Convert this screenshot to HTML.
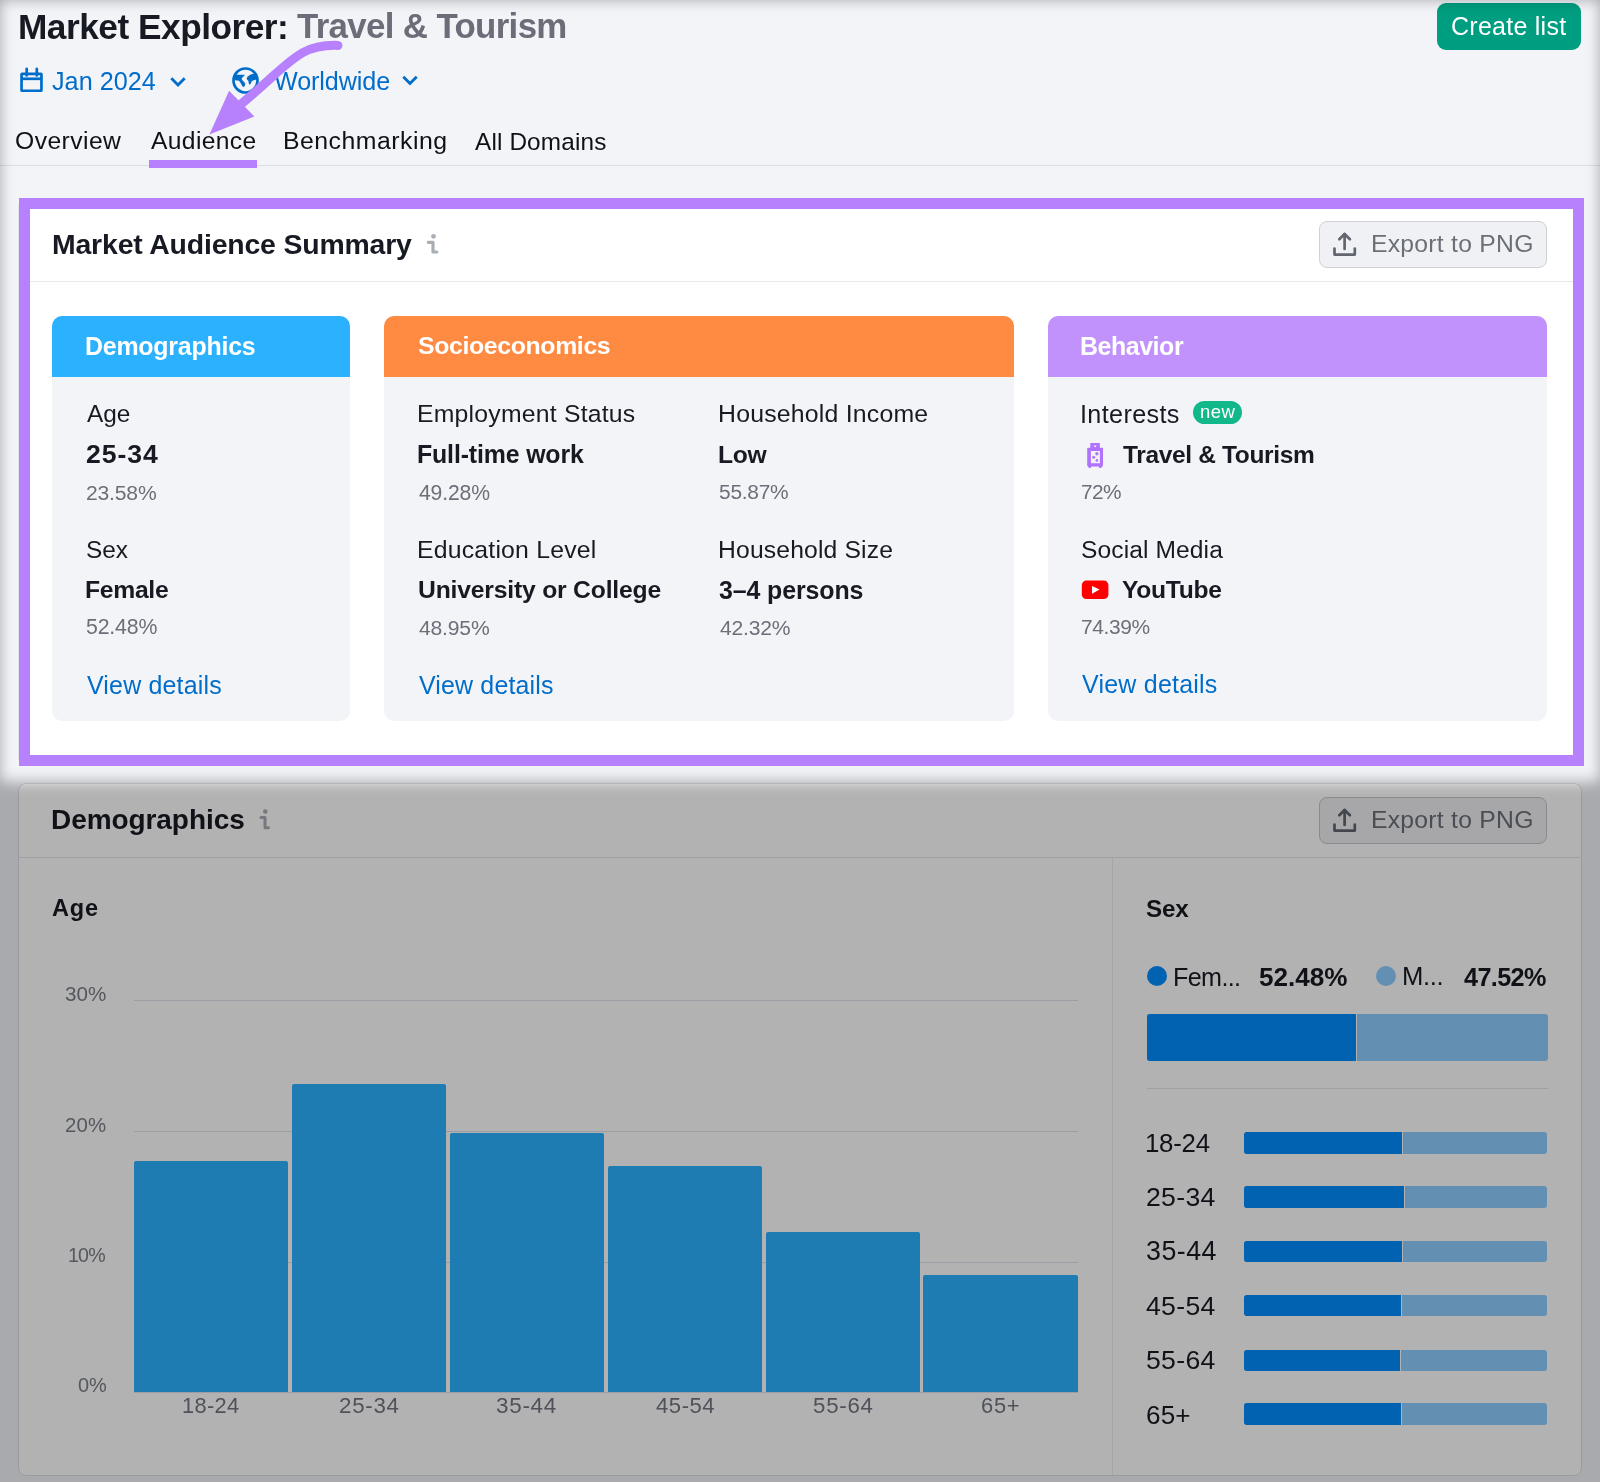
<!DOCTYPE html><html><head><meta charset="utf-8"><style>
*{margin:0;padding:0;box-sizing:border-box}
html,body{width:1600px;height:1482px;overflow:hidden}
body{position:relative;background:#f3f4f8;font-family:"Liberation Sans",sans-serif}
.t{position:absolute;white-space:pre;line-height:1;will-change:transform}
.a{position:absolute}
</style></head><body>
<div class="a" style="left:0;top:165px;width:1600px;height:1px;background:#dcdee4"></div>
<div class="a" style="left:149px;top:160px;width:108px;height:8px;background:#b780fc"></div>
<div class="a" style="left:1437px;top:3px;width:144px;height:46.5px;border-radius:9px;background:#009e80"></div>
<svg class="a" style="left:0;top:0" width="1600" height="200" viewBox="0 0 1600 200">
<g fill="none" stroke="#006dca" stroke-width="2.7">
<rect x="21.55" y="73.85" width="19.9" height="16.9" rx="0.6"/>
<line x1="21" y1="78.8" x2="42" y2="78.8"/>
<line x1="26.7" y1="68.8" x2="26.7" y2="75.5" stroke-linecap="round"/>
<line x1="36.8" y1="68.8" x2="36.8" y2="75.5" stroke-linecap="round"/>
<polyline points="171.3,78.3 178,85 184.7,78.3" stroke-width="2.8" stroke-linejoin="miter"/>
<polyline points="403.3,76.8 410,83.5 416.7,76.8" stroke-width="2.8"/>
<circle cx="245.5" cy="80.5" r="12.0"/>
</g>
<g fill="#006dca">
<path d="M234.1,75.1 C234.6,74.0 235.7,74.8 237.6,74.7 C239.5,74.6 242.4,74.6 243.8,74.7 C245.2,74.8 244.8,74.6 244.4,75.4 C244.0,76.2 241.6,77.4 241.7,78.9 C241.8,80.4 244.3,81.6 244.9,82.9 C245.5,84.2 245.2,84.8 244.9,85.6 C244.6,86.4 244.0,86.8 243.5,86.9 C243.0,87.0 242.8,86.7 242.2,85.9 C241.6,85.1 241.3,83.9 240.6,82.9 C239.9,81.9 239.8,81.4 238.7,80.8 C237.6,80.2 236.1,81.1 235.2,80.0 C234.3,78.9 233.6,76.2 234.1,75.1 Z"/>
<path d="M246.8,78.9 C246.7,77.9 246.9,77.2 248.1,76.2 C249.3,75.2 251.2,74.2 252.7,74.0 C254.2,73.8 254.9,74.1 255.7,75.1 C256.5,76.1 257.0,77.9 256.8,78.9 C256.6,79.9 255.6,79.5 254.6,80.0 C253.6,80.5 252.8,80.4 251.9,81.3 C251.0,82.2 250.9,83.8 250.3,84.3 C249.7,84.8 249.3,84.4 248.9,83.8 C248.5,83.2 248.8,82.1 248.4,81.1 C248.0,80.1 246.9,79.9 246.8,78.9 Z"/>
</g>
</svg>
<div class="t" style="left:18.3px;top:9.0px;font-size:35.26px;font-weight:700;color:#171a22;letter-spacing:-0.49px">Market Explorer:</div>
<div class="t" style="left:296.5px;top:9.3px;font-size:34.87px;font-weight:700;color:#6b6d78;letter-spacing:-0.66px">Travel &amp; Tourism</div>
<div class="t" style="left:52.4px;top:69.3px;font-size:25.2px;font-weight:400;color:#006dca;letter-spacing:0.03px">Jan 2024</div>
<div class="t" style="left:274.0px;top:69.3px;font-size:25.13px;font-weight:400;color:#006dca;letter-spacing:-0.08px">Worldwide</div>
<div class="t" style="left:15.0px;top:129.3px;font-size:24.7px;font-weight:400;color:#0f1116;letter-spacing:0.43px">Overview</div>
<div class="t" style="left:151.0px;top:129.3px;font-size:24.64px;font-weight:400;color:#0f1116;letter-spacing:0.36px">Audience</div>
<div class="t" style="left:282.5px;top:129.2px;font-size:24.83px;font-weight:400;color:#0f1116;letter-spacing:0.48px">Benchmarking</div>
<div class="t" style="left:474.5px;top:129.6px;font-size:24.33px;font-weight:400;color:#0f1116;letter-spacing:0.15px">All Domains</div>
<div class="t" style="left:1451.4px;top:14.0px;font-size:25.0px;font-weight:400;color:#ffffff;letter-spacing:0.26px">Create list</div>
<svg class="a" style="left:0;top:0" width="600" height="200" viewBox="0 0 600 200">
<path d="M338,45.4 C297.9,44.2 290.9,63 240,105" fill="none" stroke="#b780fc" stroke-width="9" stroke-linecap="round"/>
<polygon points="209.4,134.4 229.1,90.8 254.4,116.6" fill="#b780fc"/>
</svg>
<div class="a" style="left:17.6px;top:205px;width:1.2px;height:555px;background:#e1e2e6"></div>
<div class="a" style="left:19px;top:198px;width:1565px;height:568px;border:11px solid #b780fc;background:#fff"></div>
<div class="a" style="left:30px;top:281px;width:1543px;height:1px;background:#e8e9ee"></div>
<div class="a" style="left:1319px;top:220.5px;width:228px;height:47px;border:1px solid #cfd1d6;border-radius:8px;background:#f0f1f4"></div>
<svg class="a" style="left:1326px;top:226px" width="40" height="40" viewBox="0 0 40 40" fill="none" stroke="#61656e" stroke-width="2.7" stroke-linecap="round" stroke-linejoin="round">
<polyline points="8.5,22.5 8.5,28.6 28.8,28.6 28.8,22.5"/>
<line x1="18.6" y1="8" x2="18.6" y2="23"/>
<polyline points="13.3,13.3 18.6,8 23.9,13.3"/>
</svg>
<svg class="a" style="left:420px;top:225px" width="30" height="40" viewBox="0 0 30 40">
<circle cx="13.5" cy="11.3" r="2.4" fill="#a9adb4"/>
<path d="M8.3,17.3 H13 V27 H16.8" fill="none" stroke="#a9adb4" stroke-width="3.2" stroke-linecap="round" stroke-linejoin="round"/>
</svg>
<div class="a" style="left:52.4px;top:316px;width:297.6px;height:405px;border-radius:10px;background:#f3f4f8;overflow:hidden"><div style="height:60.5px;background:#2cb1ff"></div></div>
<div class="a" style="left:383.6px;top:316px;width:630.0px;height:405px;border-radius:10px;background:#f3f4f8;overflow:hidden"><div style="height:60.5px;background:#ff8b43"></div></div>
<div class="a" style="left:1047.5px;top:316px;width:499.9000000000001px;height:405px;border-radius:10px;background:#f3f4f8;overflow:hidden"><div style="height:60.5px;background:#c292fc"></div></div>
<div class="t" style="left:51.5px;top:230.0px;font-size:28.4px;font-weight:700;color:#171a22;letter-spacing:-0.16px">Market Audience Summary</div>
<div class="t" style="left:1371.3px;top:231.8px;font-size:24.76px;font-weight:400;color:#6b6f78;letter-spacing:0.24px">Export to PNG</div>
<div class="t" style="left:84.6px;top:334.3px;font-size:24.93px;font-weight:700;color:#ffffff;letter-spacing:-0.22px">Demographics</div>
<div class="t" style="left:417.7px;top:334.4px;font-size:24.8px;font-weight:700;color:#ffffff;letter-spacing:-0.34px">Socioeconomics</div>
<div class="t" style="left:1079.6px;top:334.3px;font-size:24.92px;font-weight:700;color:#ffffff;letter-spacing:-0.43px">Behavior</div>
<div class="t" style="left:86.8px;top:402.2px;font-size:24.4px;font-weight:400;color:#171a22;letter-spacing:0.00px">Age</div>
<div class="t" style="left:416.5px;top:401.9px;font-size:24.78px;font-weight:400;color:#171a22;letter-spacing:0.22px">Employment Status</div>
<div class="t" style="left:717.7px;top:401.9px;font-size:24.84px;font-weight:400;color:#171a22;letter-spacing:0.21px">Household Income</div>
<div class="t" style="left:1079.6px;top:401.6px;font-size:25.18px;font-weight:400;color:#171a22;letter-spacing:0.36px">Interests</div>
<div class="t" style="left:85.8px;top:440.9px;font-size:26.59px;font-weight:700;color:#171a22;letter-spacing:0.93px">25-34</div>
<div class="t" style="left:416.5px;top:442.3px;font-size:24.89px;font-weight:700;color:#171a22;letter-spacing:-0.14px">Full-time work</div>
<div class="t" style="left:717.7px;top:442.5px;font-size:24.65px;font-weight:700;color:#171a22;letter-spacing:-0.35px">Low</div>
<div class="t" style="left:1122.8px;top:442.6px;font-size:24.51px;font-weight:700;color:#171a22;letter-spacing:-0.35px">Travel &amp; Tourism</div>
<div class="t" style="left:85.8px;top:482.2px;font-size:21.11px;font-weight:400;color:#6b6f78;letter-spacing:-0.18px">23.58%</div>
<div class="t" style="left:418.5px;top:482.1px;font-size:21.15px;font-weight:400;color:#6b6f78;letter-spacing:-0.14px">49.28%</div>
<div class="t" style="left:718.7px;top:482.3px;font-size:20.91px;font-weight:400;color:#6b6f78;letter-spacing:-0.24px">55.87%</div>
<div class="t" style="left:1080.6px;top:482.4px;font-size:20.84px;font-weight:400;color:#6b6f78;letter-spacing:-0.55px">72%</div>
<div class="t" style="left:85.8px;top:537.9px;font-size:24.4px;font-weight:400;color:#171a22;letter-spacing:0.00px">Sex</div>
<div class="t" style="left:416.5px;top:537.6px;font-size:24.81px;font-weight:400;color:#171a22;letter-spacing:0.20px">Education Level</div>
<div class="t" style="left:717.7px;top:537.7px;font-size:24.7px;font-weight:400;color:#171a22;letter-spacing:0.16px">Household Size</div>
<div class="t" style="left:1080.6px;top:537.8px;font-size:24.58px;font-weight:400;color:#171a22;letter-spacing:0.10px">Social Media</div>
<div class="t" style="left:84.8px;top:578.2px;font-size:24.72px;font-weight:700;color:#171a22;letter-spacing:-0.30px">Female</div>
<div class="t" style="left:417.5px;top:578.2px;font-size:24.7px;font-weight:700;color:#171a22;letter-spacing:-0.19px">University or College</div>
<div class="t" style="left:718.7px;top:578.0px;font-size:24.93px;font-weight:700;color:#171a22;letter-spacing:-0.10px">3–4 persons</div>
<div class="t" style="left:1122.0px;top:578.2px;font-size:24.64px;font-weight:700;color:#171a22;letter-spacing:-0.28px">YouTube</div>
<div class="t" style="left:85.8px;top:617.0px;font-size:21.28px;font-weight:400;color:#6b6f78;letter-spacing:-0.16px">52.48%</div>
<div class="t" style="left:418.5px;top:617.2px;font-size:21.12px;font-weight:400;color:#6b6f78;letter-spacing:-0.18px">48.95%</div>
<div class="t" style="left:719.7px;top:617.2px;font-size:21.09px;font-weight:400;color:#6b6f78;letter-spacing:-0.22px">42.32%</div>
<div class="t" style="left:1080.6px;top:617.3px;font-size:20.94px;font-weight:400;color:#6b6f78;letter-spacing:-0.40px">74.39%</div>
<div class="t" style="left:86.8px;top:672.5px;font-size:24.97px;font-weight:400;color:#006dca;letter-spacing:0.17px">View details</div>
<div class="t" style="left:418.5px;top:672.5px;font-size:24.96px;font-weight:400;color:#006dca;letter-spacing:0.16px">View details</div>
<div class="t" style="left:1081.6px;top:672.4px;font-size:25.01px;font-weight:400;color:#006dca;letter-spacing:0.22px">View details</div>
<div class="a" style="left:1192.7px;top:400.6px;width:49.5px;height:23.6px;border-radius:12px;background:#13b88a"></div>
<div class="t" style="left:1199.5px;top:403.3px;font-size:18.5px;color:#fff;letter-spacing:0.4px">new</div>
<svg class="a" style="left:1076px;top:436px" width="40" height="40" viewBox="0 0 40 40">
<path fill="#b072ff" fill-rule="evenodd" d="M14.3,7 H23.8 V11.8 H26.5 Q27,11.8 27,12.5 V29.5 L25,31.9 H23.5 L22.5,30.5 H15.5 L14.5,31.9 H13 L11.2,29.5 V12.5 Q11.2,11.8 11.8,11.8 H14.3 Z M17.5,9.5 H20.8 L19.2,11.4 Z M14.9,14.9 V27.3 H23.9 V14.9 Z"/>
<circle cx="20.9" cy="17.8" r="1.7" fill="#b072ff"/>
<circle cx="17.7" cy="21.2" r="1.5" fill="#b072ff"/>
<circle cx="20.9" cy="24.4" r="1.3" fill="#b072ff"/>
</svg>
<svg class="a" style="left:1076px;top:572px" width="40" height="40" viewBox="0 0 40 40">
<rect x="5.8" y="8.6" width="26.6" height="18.4" rx="4.5" fill="#ff0000"/>
<polygon points="16,14 23.6,17.6 16,21.8" fill="#fff"/>
</svg>
<div class="a" style="left:18px;top:782.5px;width:1563.5px;height:693.5px;border:1.2px solid #dcdde2;border-radius:8px;background:#fff"></div>
<div class="a" style="left:19px;top:857px;width:1561px;height:1px;background:#e4e5ea"></div>
<div class="a" style="left:1112px;top:858px;width:1px;height:617px;background:#ecedf0"></div>
<div class="a" style="left:1319px;top:796.5px;width:228px;height:47px;border:1.2px solid #c4c6cc;border-radius:8px;background:#eff0f3"></div>
<svg class="a" style="left:1326px;top:802px" width="40" height="40" viewBox="0 0 40 40" fill="none" stroke="#61656e" stroke-width="2.7" stroke-linecap="round" stroke-linejoin="round">
<polyline points="8.5,22.5 8.5,28.6 28.8,28.6 28.8,22.5"/>
<line x1="18.6" y1="8" x2="18.6" y2="23"/>
<polyline points="13.3,13.3 18.6,8 23.9,13.3"/>
</svg>
<svg class="a" style="left:250px;top:801px" width="30" height="40" viewBox="0 0 30 40">
<circle cx="15.3" cy="10.5" r="2.3" fill="#a9adb4"/>
<path d="M11,16.5 H15 V26.8 H18.5" fill="none" stroke="#a9adb4" stroke-width="3" stroke-linecap="round" stroke-linejoin="round"/>
</svg>
<div class="a" style="left:133.7px;top:1000px;width:944px;height:1.2px;background:#e0e3ec"></div><div class="a" style="left:133.7px;top:1131px;width:944px;height:1.2px;background:#e0e3ec"></div><div class="a" style="left:133.7px;top:1261.5px;width:944px;height:1.2px;background:#e0e3ec"></div>
<div class="a" style="left:133.7px;top:1161.2px;width:154.5px;height:231.8px;background:#2cb2ff;border-radius:2px 2px 0 0"></div><div class="a" style="left:292px;top:1084.4px;width:154.0px;height:308.6px;background:#2cb2ff;border-radius:2px 2px 0 0"></div><div class="a" style="left:449.8px;top:1132.7px;width:154.5px;height:260.3px;background:#2cb2ff;border-radius:2px 2px 0 0"></div><div class="a" style="left:608px;top:1166.4px;width:154.1px;height:226.6px;background:#2cb2ff;border-radius:2px 2px 0 0"></div><div class="a" style="left:765.5px;top:1231.6px;width:154.5px;height:161.4px;background:#2cb2ff;border-radius:2px 2px 0 0"></div><div class="a" style="left:923.4px;top:1275.4px;width:154.3px;height:117.6px;background:#2cb2ff;border-radius:2px 2px 0 0"></div>
<div class="a" style="left:133.7px;top:1392px;width:944px;height:1.2px;background:#e0e3ec"></div>
<div class="a" style="left:1146.5px;top:966.3px;width:20px;height:20px;border-radius:50%;background:#008dfd"></div>
<div class="a" style="left:1376px;top:966.3px;width:20px;height:20px;border-radius:50%;background:#8dcdff"></div>
<div class="a" style="left:1146.5px;top:1013.7px;width:401px;height:47.4px;border-radius:3px;background:#8dcdff;overflow:hidden"><div style="width:210px;height:100%;background:#008dfd;border-right:1.5px solid #fff"></div></div>
<div class="a" style="left:1146.5px;top:1088px;width:401px;height:1.2px;background:#e4e5ea"></div>
<div class="a" style="left:1244.2px;top:1132.4px;width:302.8px;height:21.6px;border-radius:3px;background:#8dcdff;overflow:hidden"><div style="width:158.4px;height:100%;background:#008dfd;border-right:1.5px solid #fff"></div></div><div class="a" style="left:1244.2px;top:1186.2px;width:302.8px;height:21.6px;border-radius:3px;background:#8dcdff;overflow:hidden"><div style="width:160.4px;height:100%;background:#008dfd;border-right:1.5px solid #fff"></div></div><div class="a" style="left:1244.2px;top:1240.8px;width:302.8px;height:21.6px;border-radius:3px;background:#8dcdff;overflow:hidden"><div style="width:159.0px;height:100%;background:#008dfd;border-right:1.5px solid #fff"></div></div><div class="a" style="left:1244.2px;top:1294.9px;width:302.8px;height:21.6px;border-radius:3px;background:#8dcdff;overflow:hidden"><div style="width:158.1px;height:100%;background:#008dfd;border-right:1.5px solid #fff"></div></div><div class="a" style="left:1244.2px;top:1349.5px;width:302.8px;height:21.6px;border-radius:3px;background:#8dcdff;overflow:hidden"><div style="width:157.0px;height:100%;background:#008dfd;border-right:1.5px solid #fff"></div></div><div class="a" style="left:1244.2px;top:1403.3px;width:302.8px;height:21.6px;border-radius:3px;background:#8dcdff;overflow:hidden"><div style="width:157.6px;height:100%;background:#008dfd;border-right:1.5px solid #fff"></div></div>
<div class="t" style="left:51.3px;top:805.6px;font-size:28.03px;font-weight:700;color:#171a22;letter-spacing:-0.08px">Demographics</div>
<div class="t" style="left:1371.3px;top:807.8px;font-size:24.76px;font-weight:400;color:#6b6f78;letter-spacing:0.24px">Export to PNG</div>
<div class="t" style="left:52.3px;top:897.4px;font-size:23.52px;font-weight:700;color:#171a22;letter-spacing:0.85px">Age</div>
<div class="t" style="left:1145.7px;top:897.2px;font-size:24.21px;font-weight:700;color:#171a22;letter-spacing:-0.15px">Sex</div>
<div class="t" style="left:64.5px;top:983.5px;font-size:20.58px;font-weight:400;color:#7a7e87;letter-spacing:0.05px">30%</div>
<div class="t" style="left:65.2px;top:1115.0px;font-size:20.4px;font-weight:400;color:#7a7e87;letter-spacing:0.20px">20%</div>
<div class="t" style="left:68.2px;top:1246.1px;font-size:19.61px;font-weight:400;color:#7a7e87;letter-spacing:-0.80px">10%</div>
<div class="t" style="left:77.6px;top:1376.4px;font-size:19.93px;font-weight:400;color:#7a7e87;letter-spacing:0.00px">0%</div>
<div class="t" style="left:181.6px;top:1395.4px;font-size:21.78px;font-weight:400;color:#72767f;letter-spacing:0.35px">18-24</div>
<div class="t" style="left:339.0px;top:1395.0px;font-size:22.28px;font-weight:400;color:#72767f;letter-spacing:0.75px">25-34</div>
<div class="t" style="left:496.4px;top:1394.9px;font-size:22.45px;font-weight:400;color:#72767f;letter-spacing:0.72px">35-44</div>
<div class="t" style="left:655.8px;top:1395.1px;font-size:22.1px;font-weight:400;color:#72767f;letter-spacing:0.53px">45-54</div>
<div class="t" style="left:812.8px;top:1395.0px;font-size:22.28px;font-weight:400;color:#72767f;letter-spacing:0.75px">55-64</div>
<div class="t" style="left:981.2px;top:1395.3px;font-size:21.93px;font-weight:400;color:#72767f;letter-spacing:0.70px">65+</div>
<div class="t" style="left:1172.6px;top:964.8px;font-size:25.13px;font-weight:400;color:#171a22;letter-spacing:-0.62px">Fem...</div>
<div class="t" style="left:1259.3px;top:964.0px;font-size:26.12px;font-weight:700;color:#171a22;letter-spacing:-0.04px">52.48%</div>
<div class="t" style="left:1402.0px;top:964.4px;font-size:25.63px;font-weight:400;color:#171a22;letter-spacing:-0.33px">M...</div>
<div class="t" style="left:1463.6px;top:964.7px;font-size:25.23px;font-weight:700;color:#171a22;letter-spacing:-0.62px">47.52%</div>
<div class="t" style="left:1144.7px;top:1130.8px;font-size:25.8px;font-weight:400;color:#171a22;letter-spacing:-0.25px">18-24</div>
<div class="t" style="left:1145.7px;top:1184.3px;font-size:26.63px;font-weight:400;color:#171a22;letter-spacing:0.30px">25-34</div>
<div class="t" style="left:1145.7px;top:1238.3px;font-size:26.79px;font-weight:400;color:#171a22;letter-spacing:0.50px">35-44</div>
<div class="t" style="left:1145.7px;top:1292.7px;font-size:26.63px;font-weight:400;color:#171a22;letter-spacing:0.30px">45-54</div>
<div class="t" style="left:1145.7px;top:1346.9px;font-size:26.63px;font-weight:400;color:#171a22;letter-spacing:0.30px">55-64</div>
<div class="t" style="left:1145.7px;top:1401.5px;font-size:26.09px;font-weight:400;color:#171a22;letter-spacing:0.15px">65+</div>
<svg class="a" style="left:0;top:0" width="1600" height="1482" viewBox="0 0 1600 1482">
<defs><filter id="bl" x="-200" y="-200" width="2000" height="1900" filterUnits="userSpaceOnUse"><feGaussianBlur stdDeviation="7"/></filter></defs>
<path fill="rgba(0,0,0,0.3)" fill-rule="evenodd" filter="url(#bl)" d="M-150,-150 H1750 V1650 H-150 Z M0.3,0 H1599.7 V781.5 H0.3 Z"/>
</svg>
</body></html>
